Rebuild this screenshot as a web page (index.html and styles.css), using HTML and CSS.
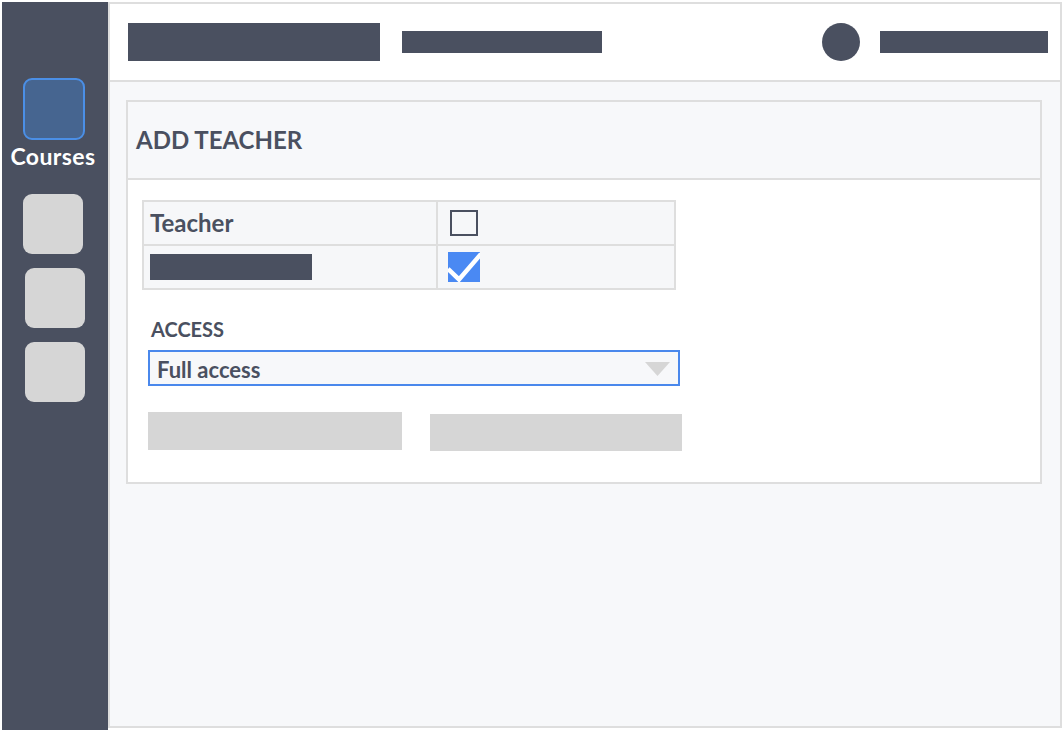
FILE: index.html
```html
<!DOCTYPE html>
<html>
<head>
    <title>Add Teacher</title>
    <link rel="stylesheet" href="styles.css">
</head>
<body>
    <div class="app">
        <nav class="sidebar">
            <div class="nav-item active">
                <div class="nav-icon"></div>
                <span class="nav-label">Courses</span>
            </div>
            <div class="nav-icon grey first"></div>
            <div class="nav-icon grey"></div>
            <div class="nav-icon grey"></div>
        </nav>

        <div class="main">
            <header class="topbar">
                <div class="bar bar-title"></div>
                <div class="bar bar-sub"></div>
                <div class="spacer"></div>
                <div class="avatar"></div>
                <div class="bar bar-user"></div>
            </header>

            <div class="content">
                <div class="card">
                    <div class="card-header">
                        <h2>ADD TEACHER</h2>
                    </div>
                    <div class="card-body">
                        <div class="role-table">
                            <div class="cell"><span class="role-name">Teacher</span></div>
                            <div class="cell"><span class="checkbox"></span></div>
                            <div class="cell"><span class="bar bar-role"></span></div>
                            <div class="cell">
                                <svg class="checkbox checked" width="32" height="30" viewBox="0 0 32 30">
                                    <rect width="32" height="30" fill="#4a89f3"/>
                                    <polyline points="0,17 11,27.5 33,2" fill="none" stroke="#fff" stroke-width="4.5"/>
                                </svg>
                            </div>
                        </div>

                        <div class="access">
                            <label class="access-label">ACCESS</label>
                            <div class="select">
                                <span class="select-value">Full access</span>
                                <svg class="select-arrow" width="25" height="14" viewBox="0 0 25 14">
                                    <polygon points="0,0 25,0 12.5,14" fill="#d6d6d6"/>
                                </svg>
                            </div>
                            <div class="buttons">
                                <div class="btn"></div>
                                <div class="btn second"></div>
                            </div>
                        </div>
                    </div>
                </div>
            </div>
        </div>
    </div>
</body>
</html>
```

FILE: styles.css
```css
body {
    margin: 0;
    padding: 0;
    background-color: #fff;
    font-family: "Lato", "Open Sans", sans-serif;
    color: #4a5060;
}

.app {
    display: flex;
    height: 728px;
    margin: 2px 0 0 2px;
}

/* left navigation */
.sidebar {
    width: 106px;
    height: 728px;
    background-color: #4a5060;
    display: flex;
    flex-direction: column;
    align-items: center;
    flex-shrink: 0;
}

.nav-item {
    display: flex;
    flex-direction: column;
    align-items: center;
    margin-top: 76px;
}

.nav-icon {
    width: 60px;
    height: 60px;
    border-radius: 9px;
    box-sizing: border-box;
}

.nav-item.active .nav-icon {
    width: 62px;
    height: 62px;
    margin-left: -2px;
    background-color: #466590;
    border: 2px solid #4b8fe6;
}

.nav-label {
    color: #fff;
    font-weight: bold;
    font-size: 23px;
    letter-spacing: 0.4px;
    line-height: 26px;
    margin-top: 3px;
    margin-left: -4px;
}

.nav-icon.grey {
    background-color: #d6d6d6;
    margin-top: 14px;
}

.nav-icon.first {
    margin-top: 25px;
    margin-left: -4px;
}

/* main area */
.main {
    width: 950px;
    height: 722px;
    border: 2px solid #dedede;
    display: flex;
    flex-direction: column;
}

.topbar {
    height: 76px;
    background-color: #fff;
    border-bottom: 2px solid #dedede;
    display: flex;
    align-items: center;
    padding: 0 12px 0 18px;
}

.bar {
    background-color: #4a5060;
    display: block;
}

.bar-title {
    width: 252px;
    height: 38px;
}

.bar-sub {
    width: 200px;
    height: 22px;
    margin-left: 22px;
}

.spacer {
    flex: 1;
}

.avatar {
    width: 38px;
    height: 38px;
    border-radius: 50%;
    background-color: #4a5060;
}

.bar-user {
    width: 168px;
    height: 22px;
    margin-left: 20px;
}

.content {
    flex: 1;
    background-color: #f7f8fa;
    padding: 18px 18px 0 16px;
}

/* card */
.card {
    border: 2px solid #dedede;
    background-color: #fff;
}

.card-header {
    height: 76px;
    background-color: #f7f8fa;
    border-bottom: 2px solid #dedede;
    display: flex;
    align-items: center;
    padding-left: 8px;
}

.card-header h2 {
    margin: 0;
    font-size: 24px;
    font-weight: bold;
    line-height: 1.2;
}

.card-body {
    padding: 20px 14px 31px 14px;
}

.role-table {
    display: grid;
    grid-template-columns: 292px 236px;
    grid-auto-rows: 42px;
    gap: 2px;
    padding: 2px;
    width: 530px;
    background-color: #dedede;
}

.cell {
    background-color: #f6f7f9;
    display: flex;
    align-items: center;
    padding-left: 6px;
}

.cell:nth-child(2n) {
    padding-left: 12px;
}

.role-name {
    font-size: 24px;
    font-weight: bold;
    line-height: 1.2;
}

.bar-role {
    width: 162px;
    height: 26px;
}

.checkbox {
    display: block;
    width: 28px;
    height: 26px;
    box-sizing: border-box;
    border: 2px solid #4a5060;
}

.checkbox.checked {
    border: none;
    width: 32px;
    height: 30px;
    margin-left: -2px;
}

/* access select */
.access {
    margin-left: 6px;
    margin-top: 27px;
}

.access-label {
    display: block;
    font-size: 20px;
    font-weight: bold;
    line-height: 24px;
    margin-left: 3px;
}

.select {
    width: 528px;
    height: 32px;
    margin-top: 9px;
    border: 2px solid #4a88ec;
    background-color: #f7f8fa;
    display: flex;
    align-items: flex-start;
}

.select-value {
    flex: 1;
    font-size: 22px;
    font-weight: bold;
    line-height: 28px;
    padding: 4px 0 0 7px;
}

.select-arrow {
    margin: 10px 8px 0 0;
}

.buttons {
    display: flex;
    align-items: flex-start;
    margin-top: 26px;
}

.btn {
    width: 254px;
    height: 38px;
    background-color: #d6d6d6;
}

.btn.second {
    width: 252px;
    height: 37px;
    margin-left: 28px;
    margin-top: 2px;
}
```
